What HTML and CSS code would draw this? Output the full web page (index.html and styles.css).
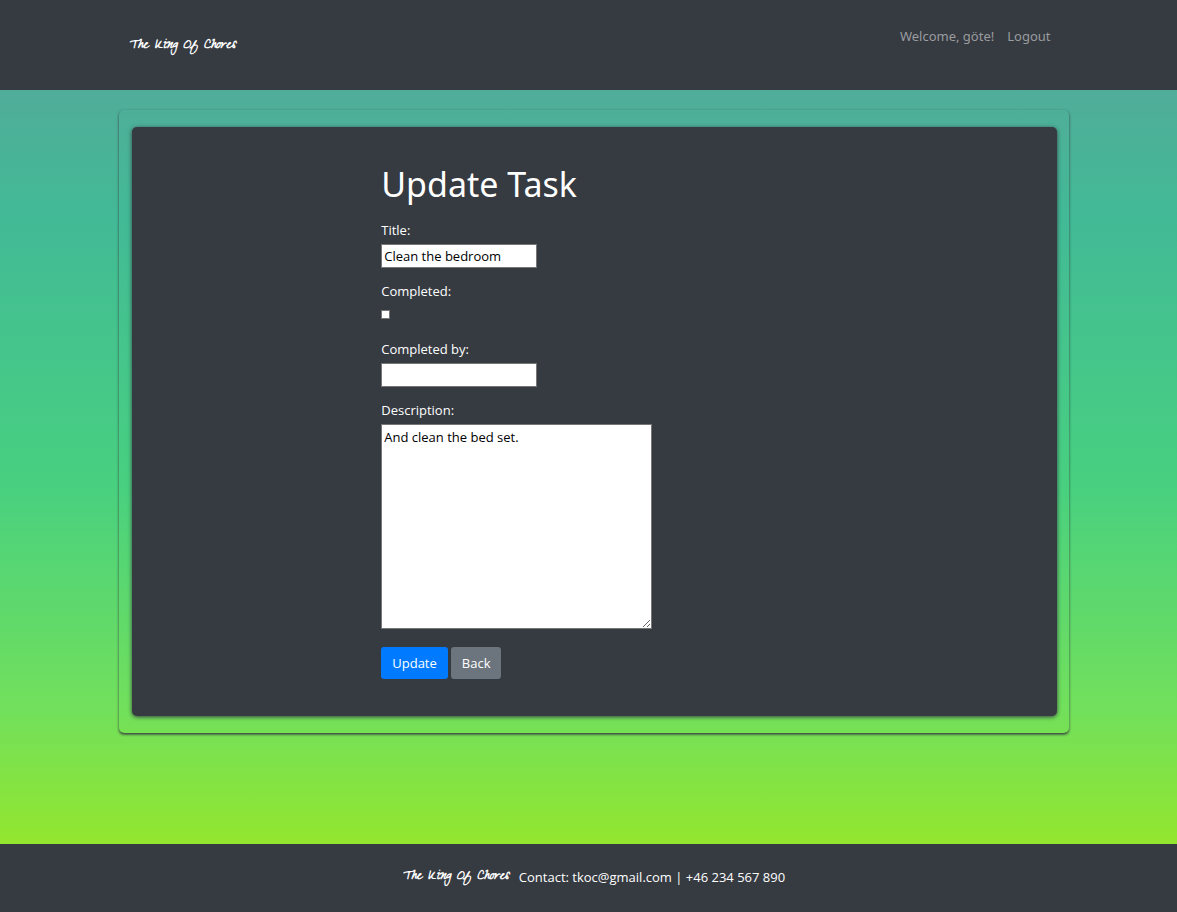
FILE: index.html
```html
<!DOCTYPE html>
<html lang="en">
<head>
<meta charset="utf-8">
<meta name="viewport" content="width=device-width, initial-scale=1">
<title>The King Of Chores</title>
<link rel="stylesheet" href="styles.css">
</head>
<body>
<header class="site-header">
  <div class="container header-row">
    <a class="brand" href="#">The King Of Chores</a>
    <nav class="user-nav">
      <span class="welcome">Welcome, göte!</span>
      <a class="logout" href="#">Logout</a>
    </nav>
  </div>
</header>
<main class="container main">
  <section class="frame">
    <form class="card">
      <h1 class="title">Update Task</h1>
      <div class="field">
        <label for="title">Title:</label>
        <input class="text-input" id="title" type="text" value="Clean the bedroom">
      </div>
      <div class="field">
        <label for="completed">Completed:</label>
        <input class="check" id="completed" type="checkbox">
      </div>
      <div class="field">
        <label for="completed-by">Completed by:</label>
        <input class="text-input" id="completed-by" type="text">
      </div>
      <div class="field">
        <label for="description">Description:</label>
        <textarea class="text-area" id="description">And clean the bed set.</textarea>
      </div>
      <div class="actions">
        <button class="btn btn-primary" type="submit">Update</button>
        <button class="btn btn-secondary" type="button">Back</button>
      </div>
    </form>
  </section>
</main>
<footer class="site-footer">
  <span class="brand">The King Of Chores</span>
  <span>Contact: tkoc@gmail.com | +46 234 567 890</span>
</footer>
</body>
</html>
```
FILE: styles.css
```css
* {
  box-sizing: border-box;
}

body {
  margin: 0;
  min-height: 100vh;
  display: flex;
  flex-direction: column;
  font-family: "Open Sans", "Noto Sans", sans-serif;
  font-size: 13px;
  line-height: 20px;
  color: #fff;
  background: linear-gradient(#5aa39b 0%, #42ba96 24%, #48d080 53%, #72e05b 78%, #94e62c 93%);
}

.container {
  width: 100%;
  max-width: 960px;
  margin: 0 auto;
  padding-left: 10px;
}

.site-header {
  background: #363a41;
  padding: 26px 0 34px;
}

.header-row {
  display: flex;
  align-items: flex-start;
  justify-content: space-between;
  padding-left: 20px;
  padding-right: 18px;
}

.brand {
  font-family: "Zeyada", "Reenie Beanie", Lato, cursive;
  font-style: italic;
  font-weight: 700;
  font-size: 16px;
  line-height: 20px;
  color: #fff;
  text-decoration: none;
}

.header-row .brand {
  padding-top: 10px;
}

.user-nav {
  display: flex;
  gap: 13px;
  font-family: "Noto Sans", sans-serif;
  color: #9a9c9f;
}

.logout {
  color: inherit;
  text-decoration: none;
}

.main {
  flex: 1;
  padding-top: 20px;
  padding-bottom: 20px;
}

.frame {
  padding: 17px 12px 17px 13px;
  border-radius: 5px;
  box-shadow: 0 2px 3px -1px #363a41, 0 1px 3px #363a41a0;
}

.card {
  padding: 36px 12px 37px 27%;
  border-radius: 5px;
  background: #363a41;
  box-shadow: 0 1px 4px #363a41;
}

.title {
  margin: 0 0 14px;
  font-family: "Noto Sans", sans-serif;
  font-size: 34px;
  line-height: 43px;
  font-weight: 400;
}

.field {
  display: flex;
  flex-direction: column;
  align-items: flex-start;
  gap: 4px;
  margin-bottom: 13px;
}

.text-input,
.text-area {
  font: inherit;
  color: #000;
  background: #fff;
  border: 1px solid #767676;
  border-radius: 0;
  padding: 1px 2px;
}

.text-input {
  width: 156px;
  height: 24px;
}

.check {
  appearance: none;
  width: 9px;
  height: 9px;
  margin: 5px 0 7px;
  background: #fff;
  border: 1px solid #767676;
}

.text-area {
  width: 271px;
  height: 205px;
  padding: 2px;
}

.actions {
  display: flex;
  gap: 3px;
  padding-top: 5px;
}

.btn {
  font: inherit;
  color: #fff;
  padding: 6px 11px;
  border: 0;
  border-radius: 3px;
}

.btn-primary {
  background: #007bff;
}

.btn-secondary {
  background: #6c757d;
}

.site-footer {
  display: flex;
  justify-content: center;
  gap: 10px;
  padding: 23px 0 25px 10px;
  background: #363a41;
}
```
